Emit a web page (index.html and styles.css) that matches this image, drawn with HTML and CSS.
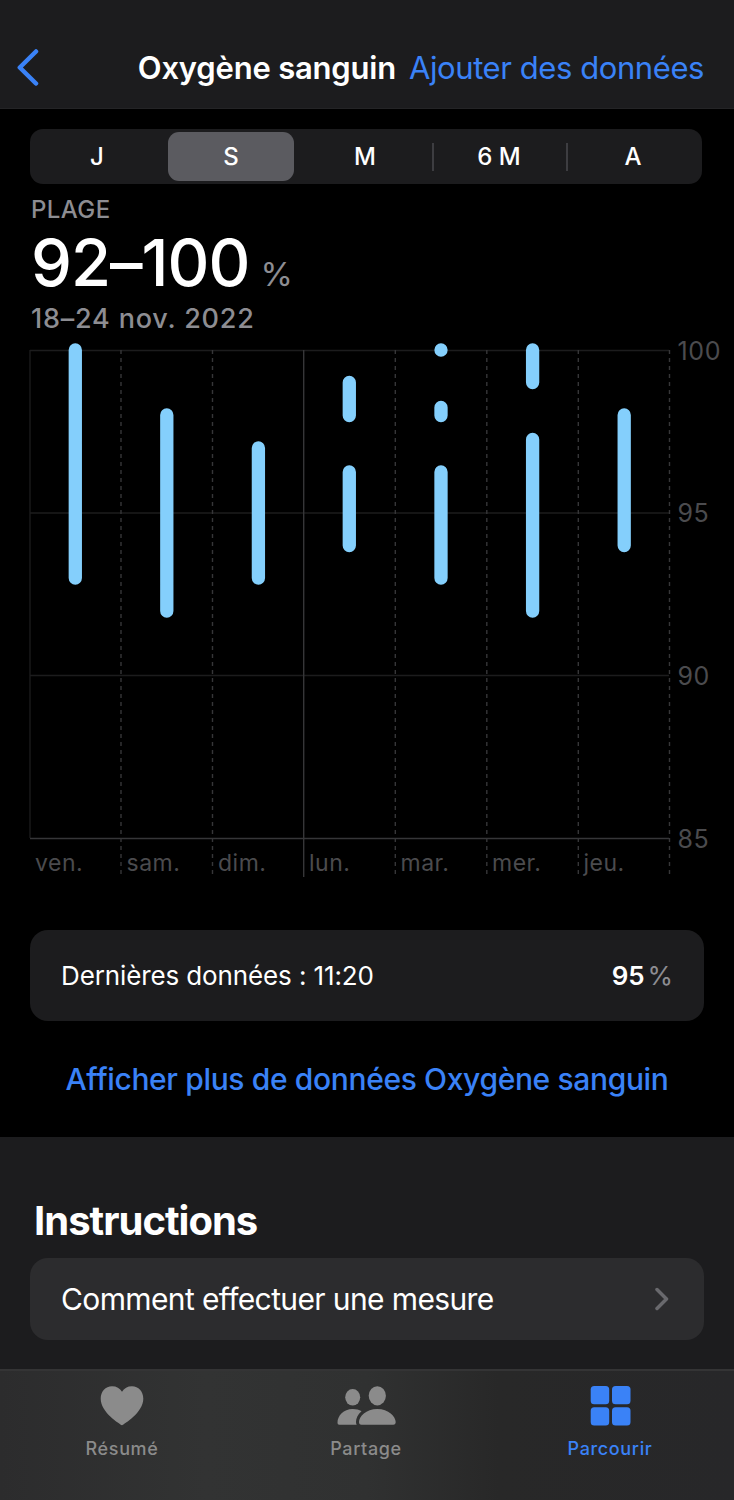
FILE: index.html
```html
<!DOCTYPE html>
<html lang="fr">
<head>
    <meta charset="UTF-8">
    <meta name="viewport" content="width=device-width, initial-scale=1.0">
    <title>Oxygène sanguin</title>
    <link rel="stylesheet" href="styles.css">
</head>
<body>
    <header class="navbar">
        <svg class="back" width="24" height="38" viewBox="0 0 24 38"><path d="M20 2.500 3.800 18.500 20 34.500"/></svg>
        <h1>Oxygène sanguin</h1>
        <a class="add">Ajouter des données</a>
    </header>

    <main>
        <div class="segments">
            <div class="segment">J</div>
            <div class="segment active">S</div>
            <div class="segment">M</div>
            <div class="segment divided">6 M</div>
            <div class="segment divided">A</div>
        </div>

        <div class="summary">
            <div class="label">PLAGE</div>
            <div class="value"><span class="range">92–100</span><span class="unit">%</span></div>
            <div class="date">18–24 nov. 2022</div>
        </div>

        <svg class="chart" width="734" height="550" viewBox="0 335 734 550">
            <!-- grid -->
            <path class="grid" d="M30 350.500H669M30 513H669M30 675.500H669M30 350V838"/>
            <path class="axis" d="M30 838.500H669M303.700 350V877"/>
            <path class="dash" d="M121 350V876M212.500 350V876M395.300 350V876M486.800 350V876M578.300 350V876M669.500 350V876"/>
            <!-- ranges per day -->
            <path class="bars" d="M75.300 350V578M166.800 415V611M258.400 448V578M349.300 382.500V415.500M349.300 472V545.500M441 350V350.010M441 407.500V415.500M441 472V578M532.600 350V382.500M532.600 439.500V611M624.200 415V545.500"/>
            <g class="scale">
                <text x="677.500" y="360">100</text>
                <text x="677.500" y="522">95</text>
                <text x="677.500" y="684.500">90</text>
                <text x="677.500" y="848">85</text>
            </g>
            <g class="days">
                <text x="35" y="871">ven.</text>
                <text x="126.500" y="871">sam.</text>
                <text x="218" y="871">dim.</text>
                <text x="309" y="871">lun.</text>
                <text x="400.500" y="871">mar.</text>
                <text x="492" y="871">mer.</text>
                <text x="583.500" y="871">jeu.</text>
            </g>
        </svg>

        <div class="card latest">
            <span>Dernières données : 11:20</span>
            <span class="reading"><b>95</b><span class="percent">%</span></span>
        </div>

        <a class="more">Afficher plus de données Oxygène sanguin</a>
    </main>

    <section class="instructions">
        <h2>Instructions</h2>
        <div class="card howto">
            <span>Comment effectuer une mesure</span>
            <svg class="chevron" width="14" height="24" viewBox="0 0 14 24"><path d="M2 2.500 11.500 12 2 21.500"/></svg>
        </div>
    </section>

    <nav class="tabbar">
        <a class="tab">
            <svg width="60" height="42" viewBox="0 0 60 42"><path d="M30 40.300C28 39.300 8.700 27.500 8.700 13.800 8.700 6.500 13.500 1.300 20 1.300c4.500 0 8 2 10 5.500 2-3.500 5.500-5.500 10-5.500 6.500 0 11.300 5.200 11.300 12.500C51.300 27.500 32 39.300 30 40.300z"/></svg>
            <span>Résumé</span>
        </a>
        <a class="tab">
            <svg width="60" height="42" viewBox="0 0 60 42">
                <ellipse cx="16.700" cy="12.300" rx="7.500" ry="8.300"/>
                <ellipse cx="41.300" cy="10.800" rx="8.600" ry="9.600"/>
                <path d="M3.300 39.700c-1.200 0-1.800-.7-1.800-2.200C1.500 31 7.500 24 16.700 24c3.500 0 6.500.9 8.800 2.300-3.800 3.200-5.500 7.300-5.500 10.800 0 1 .2 1.900.7 2.600z"/>
                <path d="M25.500 39.700c-1.800 0-2.500-.9-2.500-2.600C23 31.500 30 24 41.300 24s18.400 7.500 18.400 13.100c0 1.700-.8 2.600-2.500 2.600z"/>
            </svg>
            <span>Partage</span>
        </a>
        <a class="tab selected">
            <svg width="60" height="42" viewBox="0 0 60 42">
                <rect x="10.700" y="1" width="18.500" height="18.300" rx="3.500"/>
                <rect x="32" y="1" width="18.500" height="18.300" rx="3.500"/>
                <rect x="10.700" y="22.300" width="18.500" height="18.300" rx="3.500"/>
                <rect x="32" y="22.300" width="18.500" height="18.300" rx="3.500"/>
            </svg>
            <span>Parcourir</span>
        </a>
    </nav>
</body>
</html>
```
FILE: styles.css
```css
* {
    box-sizing: border-box;
}
body {
    margin: 0;
    width: 734px;
    height: 1500px;
    overflow: hidden;
    display: flex;
    flex-direction: column;
    background: #000;
    color: #fff;
    font-family: Inter, "Liberation Sans", sans-serif;
    white-space: nowrap;
}
h1, h2 {
    margin: 0;
}
.navbar {
    height: 109px;
    padding: 27px 30px 0 16px;
    display: flex;
    align-items: center;
    background: #1c1c1e;
    border-bottom: 1px solid #242426;
}
.back {
    fill: none;
    stroke: #3a82f7;
    stroke-width: 4.500;
    stroke-linecap: round;
    stroke-linejoin: round;
}
.navbar h1 {
    margin-left: auto;
    font-size: 31px;
    font-weight: 600;
    letter-spacing: -0.2px;
}
.add {
    margin-left: 13px;
    font-size: 31px;
    letter-spacing: -0.42px;
    color: #3a82f7;
}
main {
    height: 1028px;
    display: flex;
    flex-direction: column;
}
.segments {
    margin: 20px 32px 0 30px;
    height: 55px;
    flex: none;
    display: grid;
    grid-template-columns: repeat(5, 1fr);
    padding: 3px 2px 3px 0;
    border-radius: 13px;
    background: #1c1c1e;
    font-size: 24px;
    font-weight: 500;
}
.segment {
    display: flex;
    align-items: center;
    justify-content: center;
}
.segment.active {
    margin: 0 4px;
    border-radius: 11px;
    background: #5b5b60;
}
.segment.divided {
    background: linear-gradient(#3d3d41, #3d3d41) left center / 2px 28px no-repeat;
}
.summary {
    height: 151px;
    flex: none;
    padding: 10px 31px 0;
    color: #8d8d92;
}
.label {
    height: 30px;
    line-height: 31px;
    font-size: 24px;
    font-weight: 500;
    letter-spacing: 0.4px;
}
.value {
    height: 78px;
    line-height: 78px;
}
.range {
    font-size: 65px;
    font-weight: 500;
    letter-spacing: -1px;
    color: #fff;
}
.unit {
    margin-left: 11px;
    font-size: 33px;
}
.date {
    line-height: 33px;
    font-size: 27px;
    font-weight: 500;
    letter-spacing: 0.8px;
}
.chart {
    flex: none;
    display: block;
}
.grid {
    stroke: #1c1c1d;
    stroke-width: 1.3;
}
.axis {
    stroke: #363638;
    stroke-width: 1.4;
}
.dash {
    stroke: #363638;
    stroke-width: 1.4;
    stroke-dasharray: 4 4;
}
.bars {
    fill: none;
    stroke: #84cffc;
    stroke-width: 13.300;
    stroke-linecap: round;
}
.scale {
    fill: #4b4b4e;
    font-size: 25px;
    letter-spacing: 0.6px;
}
.days {
    fill: #4b4b4e;
    font-size: 23px;
    letter-spacing: 0.5px;
}
.card {
    margin: 0 30px;
    padding: 0 31px;
    display: flex;
    align-items: center;
    justify-content: space-between;
    border-radius: 18px;
}
.latest {
    margin-top: 45px;
    height: 91px;
    flex: none;
    background: #1c1c1e;
    font-size: 26px;
    letter-spacing: -0.12px;
}
.reading b {
    font-weight: 600;
}
.percent {
    margin-left: 3px;
    color: #8d8d92;
}
.more {
    margin-top: 39px;
    line-height: 38px;
    text-align: center;
    font-size: 30px;
    font-weight: 500;
    letter-spacing: -0.36px;
    color: #3a82f7;
}
.instructions {
    height: 232px;
    padding-top: 60px;
    background: #1c1c1e;
}
.instructions h2 {
    padding-left: 34px;
    height: 61px;
    line-height: 48px;
    font-size: 40px;
    font-weight: 700;
    letter-spacing: -1px;
}
.howto {
    height: 82px;
    background: #2c2c2e;
    font-size: 30px;
    letter-spacing: -0.62px;
}
.chevron {
    margin-right: 4px;
    fill: none;
    stroke: #69696d;
    stroke-width: 3.500;
    stroke-linecap: round;
    stroke-linejoin: round;
}
.tabbar {
    height: 131px;
    padding: 14px 2px 0 0;
    display: grid;
    grid-template-columns: repeat(3, 244px);
    border-top: 2px solid #343435;
    background: linear-gradient(90deg, #2c2c2d, #323333 28%, #303131 50%, #282828 68%, #272729);
}
.tab {
    display: flex;
    flex-direction: column;
    align-items: center;
    gap: 10px;
    font-size: 18px;
    font-weight: 500;
    line-height: 24px;
    letter-spacing: 0.65px;
    color: #8b8b8b;
    fill: currentColor;
}
.tab.selected {
    color: #3a82f7;
}
```
